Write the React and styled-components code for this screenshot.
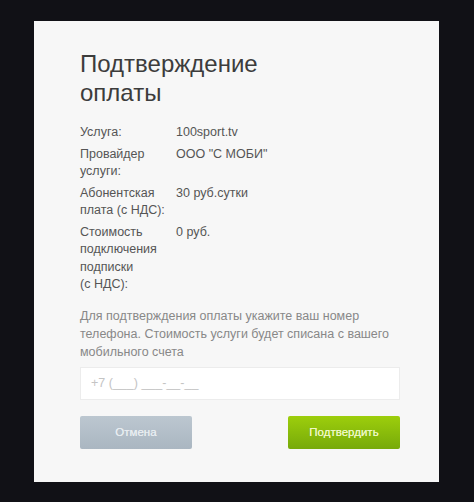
import React from 'react';
import styled, { createGlobalStyle } from 'styled-components';

const GlobalStyle = createGlobalStyle`
  html, body {
    margin: 0;
    padding: 0;
    background: #111116;
  }
  body {
    font-family: "Liberation Sans", Arial, sans-serif;
  }
`;

const Page = styled.div`
  min-height: 502px;
  padding: 21px 0 0 34px;
  box-sizing: border-box;
`;

const Card = styled.div`
  width: 405px;
  height: 461px;
  box-sizing: border-box;
  background: #f7f7f7;
  padding: 28px 39px 0 46px;
  display: flex;
  flex-direction: column;
`;

const Title = styled.h1`
  margin: 0;
  font-weight: normal;
  font-size: 24px;
  line-height: 29px;
  color: #3c3c3c;
  width: 200px;
`;

const Details = styled.div`
  margin-top: 17px;
  display: flex;
  flex-direction: column;
  gap: 4px;
`;

const Row = styled.div`
  display: grid;
  grid-template-columns: 96px 1fr;
  font-size: 12.5px;
  line-height: 17.5px;
  color: #555;
`;

const Label = styled.div``;

const Value = styled.div``;

const Note = styled.p`
  margin: 13px 0 0;
  font-size: 12.5px;
  line-height: 18px;
  color: #888;
`;

const PhoneInput = styled.input`
  margin-top: 6px;
  height: 33px;
  box-sizing: border-box;
  width: 320px;
  border: 1px solid #ececec;
  background: #fff;
  padding: 0 10px;
  font-family: inherit;
  font-size: 12.5px;
  color: #555;
  outline: none;

  &::placeholder {
    color: #c4c4c4;
  }
`;

const Buttons = styled.div`
  margin-top: 16px;
  width: 320px;
  display: flex;
  justify-content: space-between;
`;

const Button = styled.button`
  width: 112px;
  height: 33px;
  border: none;
  border-radius: 2px;
  font-family: inherit;
  font-size: 11.5px;
  color: ${(p) => (p.$primary ? '#eef7c4' : '#e8edf1')};
  text-shadow: 0 0 0.4px currentColor;
  background: ${(p) =>
    p.$primary
      ? 'linear-gradient(#9dce0c, #77aa0a)'
      : 'linear-gradient(#bcc7d0, #aab6c1)'};
  cursor: pointer;
`;

const rows = [
  ['Услуга:', '100sport.tv'],
  ['Провайдер услуги:', 'ООО "С МОБИ"'],
  ['Абонентская плата (с\u00a0НДС):', '30 руб.сутки'],
  ['Стоимость подключения подписки (с\u00a0НДС):', '0 руб.'],
];

export default function App() {
  return (
    <>
      <GlobalStyle />
      <Page>
        <Card>
          <Title>Подтверждение оплаты</Title>
          <Details>
            {rows.map(([label, value]) => (
              <Row key={label}>
                <Label>{label}</Label>
                <Value>{value}</Value>
              </Row>
            ))}
          </Details>
          <Note>
            Для подтверждения оплаты укажите ваш номер телефона. Стоимость
            услуги будет списана с вашего мобильного счета
          </Note>
          <PhoneInput placeholder="+7 (___) ___-__-__" />
          <Buttons>
            <Button>Отмена</Button>
            <Button $primary>Подтвердить</Button>
          </Buttons>
        </Card>
      </Page>
    </>
  );
}
